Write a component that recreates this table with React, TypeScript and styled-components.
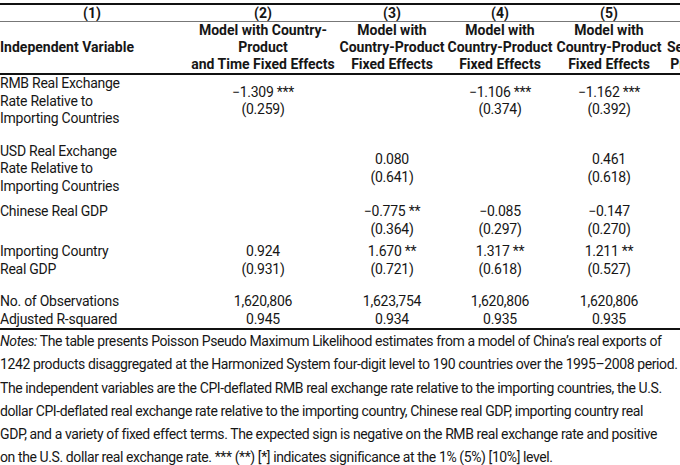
import styled, { createGlobalStyle } from 'styled-components'

const GlobalStyle = createGlobalStyle`
  html, body {
    margin: 0;
    padding: 0;
    background: #fff;
    overflow: hidden;
  }
  body {
    font-family: Roboto, "Liberation Sans", sans-serif;
    color: #161616;
    font-size: 14px;
    letter-spacing: -0.25px;
  }
`

const COLUMNS = '184px 158px 100px 116px 102px 70px'

const Page = styled.div`
  width: 730px;
  padding-top: 3px;
`

const Rule = styled.div<{ $weight: number; $color?: string }>`
  height: 0;
  border-top: ${p => p.$weight}px solid ${p => p.$color || '#111'};
`

const Row = styled.div<{ $top?: number }>`
  display: grid;
  grid-template-columns: ${COLUMNS};
  margin-top: ${p => p.$top || 0}px;
  line-height: 17.5px;
`

const NumberRow = styled(Row)`
  height: 16px;
  line-height: 16px;
  font-weight: 700;
  letter-spacing: 0;
`

const HeadRow = styled(Row)`
  line-height: 17px;
  font-weight: 700;
  letter-spacing: 0;
`

const Centered = styled.div`
  display: flex;
  flex-direction: column;
  align-items: center;
  justify-content: center;
  white-space: nowrap;
  min-width: 0;
`

const LabelCell = styled.div<{ $middle?: boolean }>`
  display: flex;
  flex-direction: column;
  justify-content: ${p => (p.$middle ? 'center' : 'flex-start')};
  white-space: nowrap;
`

const Notes = styled.div`
  line-height: 23.3px;
  white-space: nowrap;
  width: 680px;
  letter-spacing: -0.4px;
`

const NoteLabel = styled.em`
  font-style: italic;
`

type Cell = [string, string] | null

const headers: string[][] = [
  ['Model with Country-', 'Product', 'and Time Fixed Effects'],
  ['Model with', 'Country-Product', 'Fixed Effects'],
  ['Model with', 'Country-Product', 'Fixed Effects'],
  ['Model with', 'Country-Product', 'Fixed Effects'],
  ['', 'Separate', 'Product'],
]

const rows: { label: string[]; values: Cell[]; top: number }[] = [
  {
    label: ['RMB Real Exchange', 'Rate Relative to', 'Importing Countries'],
    values: [['−1.309 ***', '(0.259)'], null, ['−1.106 ***', '(0.374)'], ['−1.162 ***', '(0.392)']],
    top: 0,
  },
  {
    label: ['USD Real Exchange', 'Rate Relative to', 'Importing Countries'],
    values: [null, ['0.080', '(0.641)'], null, ['0.461', '(0.618)']],
    top: 15,
  },
  {
    label: ['Chinese Real GDP'],
    values: [null, ['−0.775 **', '(0.364)'], ['−0.085', '(0.297)'], ['−0.147', '(0.270)']],
    top: 8,
  },
  {
    label: ['Importing Country', 'Real GDP'],
    values: [['0.924', '(0.931)'], ['1.670 **', '(0.721)'], ['1.317 **', '(0.618)'], ['1.211 **', '(0.527)']],
    top: 5,
  },
]

const stats = [
  { label: 'No. of Observations', values: ['1,620,806', '1,623,754', '1,620,806', '1,620,806'], top: 15 },
  { label: 'Adjusted R-squared', values: ['0.945', '0.934', '0.935', '0.935'], top: 0 },
]

const notes = [
  'The table presents Poisson Pseudo Maximum Likelihood estimates from a model of China’s real exports of',
  '1242 products disaggregated at the Harmonized System four-digit level to 190 countries over the 1995–2008 period.',
  'The independent variables are the CPI-deflated RMB real exchange rate relative to the importing countries, the U.S.',
  'dollar CPI-deflated real exchange rate relative to the importing country, Chinese real GDP, importing country real',
  'GDP, and a variety of fixed effect terms. The expected sign is negative on the RMB real exchange rate and positive',
  'on the U.S. dollar real exchange rate. *** (**) [*] indicates significance at the 1% (5%) [10%] level.',
]

export default function App() {
  return (
    <>
      <GlobalStyle />
      <Page>
        <Rule $weight={2} />
        <NumberRow>
          {['(1)', '(2)', '(3)', '(4)', '(5)', '(6)'].map(n => (
            <Centered key={n}>{n}</Centered>
          ))}
        </NumberRow>
        <Rule $weight={1} $color="#777" />
        <HeadRow>
          <LabelCell $middle>Independent Variable</LabelCell>
          {headers.map((h, i) => (
            <Centered key={i}>
              {h.map((line, j) => (
                <div key={j}>{line || '\u00a0'}</div>
              ))}
            </Centered>
          ))}
        </HeadRow>
        <Rule $weight={2} />
        {rows.map(r => (
          <Row key={r.label.join(' ')} $top={r.top}>
            <LabelCell>
              {r.label.map(l => (
                <div key={l}>{l}</div>
              ))}
            </LabelCell>
            {r.values.map((v, i) => (
              <Centered key={i}>
                {v && (
                  <>
                    <div>{v[0]}</div>
                    <div>{v[1]}</div>
                  </>
                )}
              </Centered>
            ))}
          </Row>
        ))}
        {stats.map(s => (
          <Row key={s.label} $top={s.top}>
            <LabelCell>{s.label}</LabelCell>
            {s.values.map((v, i) => (
              <Centered key={i}>{v}</Centered>
            ))}
          </Row>
        ))}
        <Rule $weight={2} />
        <Notes>
          {notes.map((n, i) => (
            <div key={i}>
              {i === 0 && (
                <>
                  <NoteLabel>Notes:</NoteLabel>{' '}
                </>
              )}
              {n}
            </div>
          ))}
        </Notes>
      </Page>
    </>
  )
}
